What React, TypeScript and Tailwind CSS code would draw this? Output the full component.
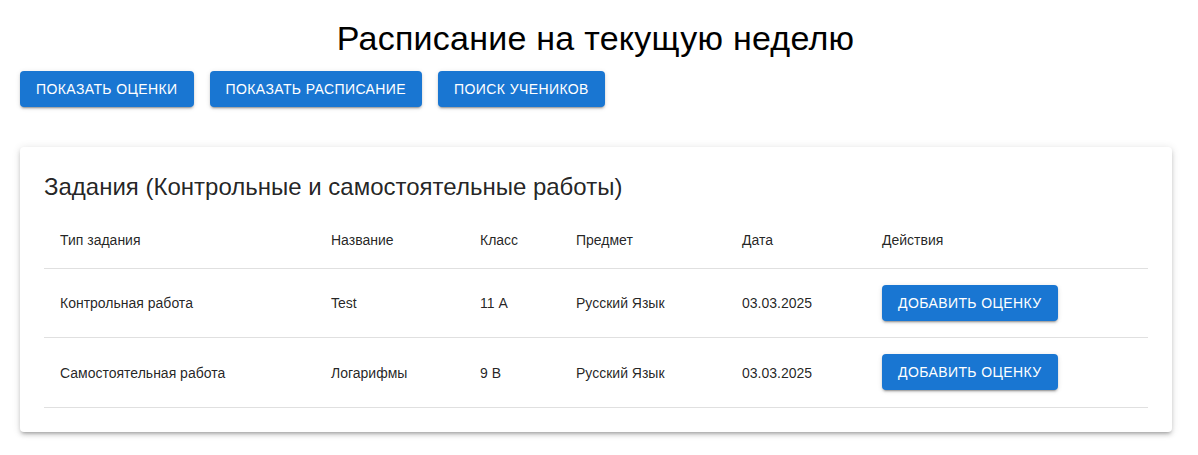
const rows = [
  { type: 'Контрольная работа', name: 'Test', cls: '11 А', subject: 'Русский Язык', date: '03.03.2025' },
  { type: 'Самостоятельная работа', name: 'Логарифмы', cls: '9 В', subject: 'Русский Язык', date: '03.03.2025' },
]

const btn =
  'h-9 px-4 rounded bg-[#1976d2] text-white text-sm uppercase tracking-[0.4px] shadow-[0_3px_1px_-2px_rgba(0,0,0,0.2),0_2px_2px_0_rgba(0,0,0,0.14),0_1px_5px_0_rgba(0,0,0,0.12)]'

export default function App() {
  return (
    <main className="w-[1198px] min-h-[455px] bg-white px-5 pt-[17px] font-['Liberation_Sans',Arial,sans-serif] text-[rgba(0,0,0,0.87)]">
      <h1 className="pr-[7px] text-center text-[34px] leading-[42px] tracking-[0.25px] text-black">Расписание на текущую неделю</h1>

      <div className="mt-3 flex gap-4">
        <button className={btn}>Показать оценки</button>
        <button className={btn}>Показать расписание</button>
        <button className={btn}>Поиск учеников</button>
      </div>

      <section className="mt-10 w-[1152px] rounded bg-white p-6 shadow-[0_3px_3px_-2px_rgba(0,0,0,0.2),0_3px_4px_0_rgba(0,0,0,0.14),0_1px_8px_0_rgba(0,0,0,0.12)]">
        <h2 className="mb-[9px] text-2xl leading-8">Задания (Контрольные и самостоятельные работы)</h2>
        <table className="w-full border-collapse text-sm">
          <thead>
            <tr className="border-b border-[#e0e0e0]">
              <th className="w-[271px] p-4 text-left font-normal leading-6">Тип задания</th>
              <th className="w-[149px] p-4 text-left font-normal leading-6">Название</th>
              <th className="w-[96px] p-4 text-left font-normal leading-6">Класс</th>
              <th className="w-[166px] p-4 text-left font-normal leading-6">Предмет</th>
              <th className="w-[140px] p-4 text-left font-normal leading-6">Дата</th>
              <th className="p-4 text-left font-normal leading-6">Действия</th>
            </tr>
          </thead>
          <tbody>
            {rows.map((r, i) => (
              <tr key={i} className="border-b border-[#e0e0e0]">
                <td className="p-4">{r.type}</td>
                <td className="p-4">{r.name}</td>
                <td className="p-4">{r.cls}</td>
                <td className="p-4">{r.subject}</td>
                <td className="p-4">{r.date}</td>
                <td className={i === 1 ? 'px-4 pt-4 pb-[17px]' : 'p-4'}>
                  <button className={btn}>Добавить оценку</button>
                </td>
              </tr>
            ))}
          </tbody>
        </table>
      </section>
    </main>
  )
}
